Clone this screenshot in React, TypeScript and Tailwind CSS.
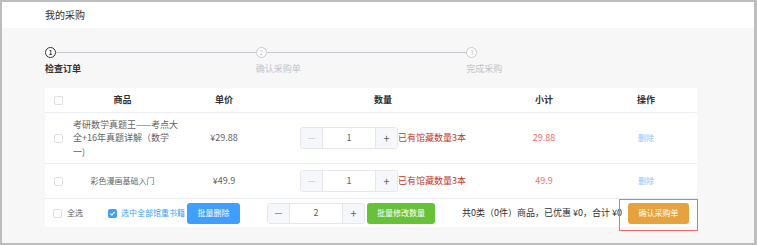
const rows = [
  {
    name: ["考研数学真题王——考点大", "全+16年真题详解（数学", "一)"],
    price: "¥29.88",
    qty: 1,
    subtotal: "29.88",
    tall: true,
  },
  {
    name: ["彩色漫画基础入门"],
    price: "¥49.9",
    qty: 1,
    subtotal: "49.9",
    tall: false,
  },
];

const steps = [
  { n: 1, label: "检查订单", active: true },
  { n: 2, label: "确认采购单", active: false },
  { n: 3, label: "完成采购", active: false },
];

function Box({ checked = false }: { checked?: boolean }) {
  if (checked) {
    return (
      <span className="flex h-[9px] w-[9px] items-center justify-center rounded-[2px] bg-[#409eff]">
        <svg width="7" height="7" viewBox="0 0 10 10" fill="none">
          <path d="M2 5.2 L4.2 7.3 L8 2.8" stroke="#fff" strokeWidth="1.6" />
        </svg>
      </span>
    );
  }
  return <span className="block h-[9px] w-[9px] rounded-[2px] border border-[#dcdfe6] bg-white" />;
}

function Stepper({ value, dim, short = false }: { value: number; dim: boolean; short?: boolean }) {
  return (
    <div
      className={`flex w-[98px] shrink-0 overflow-hidden rounded-[3px] border border-[#e4e7ed] bg-white text-[9px] ${
        short ? "h-[21px]" : "h-[22px]"
      }`}
    >
      <span
        className={`flex w-[22px] items-center justify-center border-r border-[#e4e7ed] bg-[#f5f7fa] ${
          dim ? "text-[#c0c4cc]" : "text-[#606266]"
        }`}
      >
        —
      </span>
      <span className="flex flex-1 items-center justify-center text-[#606266]">{value}</span>
      <span className="flex w-[22px] items-center justify-center border-l border-[#e4e7ed] bg-[#f5f7fa] text-[11px] text-[#606266]">
        +
      </span>
    </div>
  );
}

export default function App() {
  return (
    <div className="h-[245px] w-[757px] bg-[#bdbdbd] pb-[2px] pl-[2px] pr-[3px] pt-[2px] font-['Noto_Sans_CJK_SC',sans-serif]">
      <div className="flex h-full flex-col">
        {/* Header */}
        <div className="flex h-[26px] items-center bg-white pb-[2px] pl-[43px] text-[10px] text-[#303133]">
          我的采购
        </div>

        <div className="flex-1 bg-[#f7f7f7] pl-[43px] pt-[19px]">
          {/* Steps */}
          <div className="flex w-[632px]">
            {steps.map((s, i) => (
              <div key={s.n} className="flex-1">
                <div className="flex h-[11px] items-center">
                  <span
                    className={`flex h-[11px] w-[11px] shrink-0 items-center justify-center rounded-full border-[1.5px] bg-white text-[6px] leading-none ${
                      s.active
                        ? "border-[#303133] font-bold text-[#303133]"
                        : "border-[#c8c9cc] text-[#c0c4cc]"
                    }`}
                  >
                    {s.n}
                  </span>
                  {i < steps.length - 1 && <span className="h-px flex-1 bg-[#c8c9d0]" />}
                </div>
                <div
                  className={`mt-[5px] text-[9px] leading-[12px] ${
                    s.active ? "font-bold text-[#303133]" : "text-[#c0c4cc]"
                  }`}
                >
                  {s.label}
                </div>
              </div>
            ))}
          </div>

          {/* Table card */}
          <div className="mt-[13px] w-[652px] bg-white text-[9px] text-[#606266]">
            <div className="grid h-[25px] grid-cols-[25px_105px_98px_220px_102px_102px] items-center border-b border-[#ebeef5] font-bold text-[#303133]">
              <span className="pl-[9px]">
                <Box />
              </span>
              <span className="text-center">商品</span>
              <span className="text-center">单价</span>
              <span className="text-center">数量</span>
              <span className="text-center">小计</span>
              <span className="text-center">操作</span>
            </div>

            {rows.map((r) => (
              <div
                key={r.price}
                className={`grid grid-cols-[25px_105px_98px_220px_102px_102px] items-center border-b border-[#ebeef5] ${
                  r.tall ? "h-[51px]" : "h-[35px]"
                }`}
              >
                <span className="pl-[9px]">
                  <Box />
                </span>
                {r.tall ? (
                  <span className="flex flex-col whitespace-nowrap pl-[3px] leading-[13.5px]">
                    {r.name.map((line) => (
                      <span key={line}>{line}</span>
                    ))}
                  </span>
                ) : (
                  <span className="whitespace-nowrap text-center text-[8px]">{r.name[0]}</span>
                )}
                <span className="text-center">{r.price}</span>
                <div className="flex items-center justify-center whitespace-nowrap">
                  <Stepper value={r.qty} dim />
                  <span className="text-[#c0392b]">已有馆藏数量3本</span>
                </div>
                <span className="text-center text-[#f56c6c]">{r.subtotal}</span>
                <span className="text-center text-[8px] text-[#8cc5ff]">删除</span>
              </div>
            ))}

            {/* Footer */}
            <div className="flex h-[28px] items-center whitespace-nowrap">
              <span className="ml-[8px]">
                <Box />
              </span>
              <span className="ml-[5px] text-[8px]">全选</span>
              <span className="ml-[25px]">
                <Box checked />
              </span>
              <span className="ml-[4px] text-[8px] text-[#409eff]">选中全部馆重书籍</span>
              <button className="ml-[2px] flex h-[21px] w-[53px] shrink-0 items-center justify-center rounded-[3px] bg-[#409eff] text-[8px] text-white">
                批量删除
              </button>
              <div className="ml-[27px]">
                <Stepper value={2} dim={false} short />
              </div>
              <button className="ml-[2px] flex h-[21px] w-[68px] shrink-0 items-center justify-center rounded-[3px] bg-[#67c23a] text-[8px] text-white">
                批量修改数量
              </button>
              <span className="ml-[27px] text-[#303133]">共0类（0件）商品，已优惠 ¥0，合计 ¥0</span>
              <div className="relative ml-auto mr-[8px]">
                <span className="absolute -bottom-[7px] -left-[9px] -right-[9px] -top-[4px] border border-[#f56c6c]" />
                <button className="flex h-[21px] w-[61px] items-center justify-center rounded-[3px] bg-[#e6a23c] text-[8px] text-white">
                  确认采购单
                </button>
              </div>
            </div>
          </div>
        </div>
      </div>
    </div>
  );
}
